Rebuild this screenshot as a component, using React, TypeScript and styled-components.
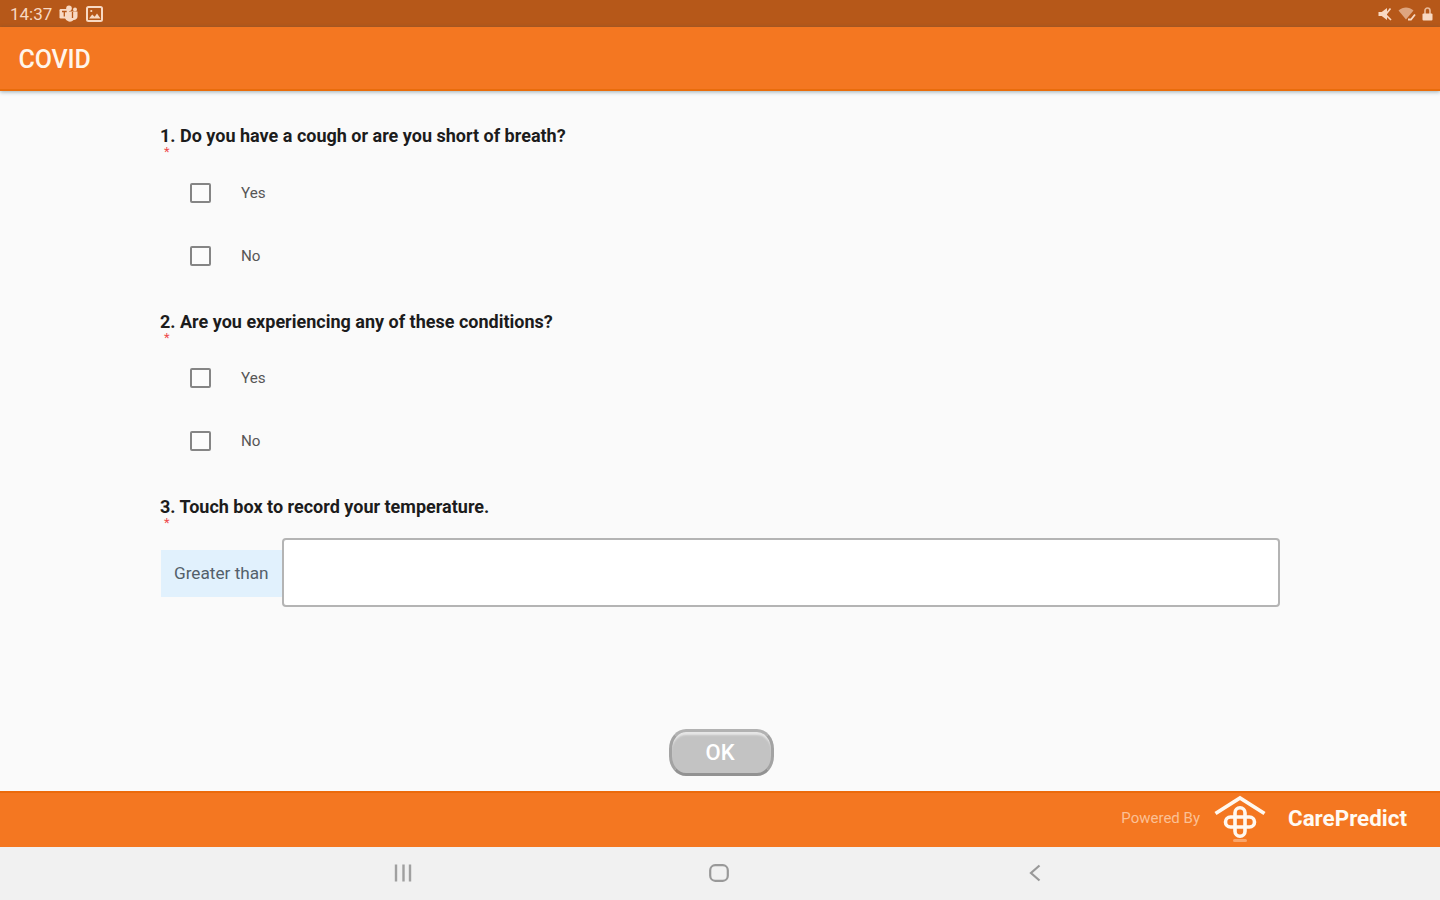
import React, {FC, useState} from "react";
import styled, {createGlobalStyle} from "styled-components";

const GlobalStyle = createGlobalStyle`
  * {
    box-sizing: border-box;
  }

  body {
    margin: 0;
    font-family: Roboto, "Liberation Sans", sans-serif;
    background-color: #fafafa;
  }
`

const Screen = styled.div`
  width: 100%;
  height: 100vh;
  display: flex;
  flex-direction: column;
  overflow: hidden;
`

const StatusBar = styled.div`
  height: 27px;
  flex-shrink: 0;
  display: flex;
  justify-content: space-between;
  align-items: center;
  padding: 1px 7px 0 10px;
  background-color: #b65819;
  color: #f8d9c3;
`

const StatusGroup = styled.div<{$gap: number}>`
  display: flex;
  align-items: center;
  gap: ${({$gap}) => $gap}px;
`

const Clock = styled.span`
  width: 42px;
  font-size: 17px;
  line-height: 20px;
  white-space: nowrap;
`

const AppBar = styled.header`
  height: 64px;
  flex-shrink: 0;
  display: flex;
  align-items: center;
  padding: 3px 18.5px 0;
  background-color: #f47721;
  border-bottom: 2px solid #e96c0b;
  box-shadow: 0 1px 4px rgba(40, 80, 95, 0.45);
  z-index: 1;
`

const Title = styled.h1`
  margin: 0;
  color: #fff5ea;
  font-size: 25px;
  line-height: 28px;
  font-weight: 500;
  letter-spacing: -0.1px;
`

const Survey = styled.main`
  flex: 1;
  display: flex;
  flex-direction: column;
  padding: 35px 160px 0;
  background-color: #fafafa;
`

const Question = styled.section`
  height: 185.5px;
  flex-shrink: 0;
`

const QuestionText = styled.div`
  height: 20px;
  color: #1c1c1c;
  font-size: 18px;
  line-height: 20px;
  font-weight: 700;
  white-space: nowrap;
`

const Required = styled.div`
  height: 15.4px;
  padding-left: 4px;
  color: #ee4b4b;
  font-size: 13px;
  line-height: 12px;
`

const Option = styled.label`
  height: 63px;
  display: flex;
  align-items: center;
  gap: 30px;
  padding-left: 30px;
  color: #565656;
  font-size: 15.2px;
`

const CheckBox = styled.input`
  appearance: none;
  width: 21px;
  height: 20px;
  margin: 0;
  border: 2px solid #858585;
  border-radius: 2px;
  background-color: #fcfcfc;

  &:checked {
    background-color: #f47721;
  }
`

const TemperatureRow = styled.div`
  display: flex;
  align-items: center;
  height: 69px;
  margin-top: 5.6px;
`

const Comparison = styled.div`
  width: 122px;
  height: 47px;
  flex-shrink: 0;
  display: flex;
  align-items: center;
  margin-top: 2px;
  padding: 0 0 1px 13px;
  background-color: #e1f1fd;
  border-left: 1px solid #fafafa;
  color: #53606a;
  font-size: 17.2px;
  white-space: nowrap;
`

const TemperatureInput = styled.input`
  flex: 1;
  height: 69px;
  padding: 0 16px;
  border: 2px solid #b4b4b4;
  border-radius: 4px;
  background-color: #ffffff;
  font-size: 18px;
`

const OkButton = styled.button`
  width: 105px;
  height: 47px;
  margin: auto auto 15px 509px;
  padding: 0 3px 0 0;
  border: 3px solid;
  border-color: #b2b2b2 #a3a3a3 #929292;
  border-radius: 17px / 20px;
  background-color: #c3c3c3;
  box-shadow: inset 0 4px 2px -1px #e6e6e6;
  color: #ffffff;
  font-family: inherit;
  font-size: 22px;
  font-weight: 500;
`

const Footer = styled.footer`
  height: 56px;
  flex-shrink: 0;
  display: flex;
  align-items: center;
  justify-content: flex-end;
  padding: 0 33px 5px 0;
  background-color: #f47721;
  border-top: 2px solid #eb6a0b;
`

const PoweredBy = styled.span`
  color: #fbc095;
  font-size: 15px;
`

const Brand = styled.span`
  color: #fffaf3;
  font-size: 22.4px;
  font-weight: 700;
`

const LogoSvg = styled.svg`
  margin: 4px 22px 0 14px;
`

const NavBar = styled.nav`
  height: 53px;
  flex-shrink: 0;
  display: grid;
  grid-template-columns: repeat(3, 316px);
  justify-content: center;
  align-items: center;
  justify-items: center;
  padding: 0 2px 2px 0;
  background-color: #f1f1f1;
`

const TeamsIcon: FC = () => (
  <svg width="20" height="18" viewBox="0 0 20 18" fill="currentColor">
    <circle cx="10" cy="3.2" r="2.8"/>
    <circle cx="16" cy="4.4" r="2"/>
    <path d="M8 6.5h10.5v5a3.6 3.6 0 0 1-3.9 3.5A5 5 0 0 1 6 13z"/>
    <rect x="0.5" y="4" width="9.5" height="9.5" rx="1.2"/>
    <path d="M3 6.5h4.7M5.3 6.5v5M13.5 7v6" stroke="#b65819" strokeWidth="1.3"/>
  </svg>
)

const PictureIcon: FC = () => (
  <svg width="17" height="16" viewBox="0 0 17 16" fill="none" stroke="currentColor" strokeWidth="2">
    <rect x="1" y="1" width="15" height="14" rx="1.5"/>
    <path d="M3 12.5l3.2-4 2.5 2.2L11 7.5l3.5 5z" fill="currentColor" stroke="none"/>
    <circle cx="5.3" cy="5" r="1.1" fill="currentColor" stroke="none"/>
  </svg>
)

const MuteIcon: FC = () => (
  <svg width="14" height="14" viewBox="0 0 14 14" fill="currentColor">
    <path d="M0.5 5h3.2L9 1v12L3.7 9H0.5z"/>
    <path d="M5 5l8 8M8.5 6.5l4-5" stroke="currentColor" strokeWidth="1.7"/>
  </svg>
)

const WifiIcon: FC = () => (
  <svg width="18" height="14" viewBox="0 0 18 14">
    <path d="M0.5 3.5C5-0.5 11-0.5 15.5 3.5L8 12.5z" fill="currentColor" opacity="0.6"/>
    <path d="M10 12.5h3l4-5" fill="none" stroke="currentColor" strokeWidth="1.8"/>
  </svg>
)

const LockIcon: FC = () => (
  <svg width="11" height="14" viewBox="0 0 11 14">
    <path d="M3 7V3.5a2.5 2.5 0 0 1 5 0V7" fill="none" stroke="currentColor" strokeWidth="1.7" opacity="0.75"/>
    <rect x="0.5" y="6.5" width="10" height="7" rx="1" fill="currentColor"/>
  </svg>
)

const Logo: FC = () => (
  <LogoSvg width="52" height="50" viewBox="0 0 52 50" fill="none" stroke="#fff8f0">
    <path d="M1.5 18.5L26 3L50.5 18.5" strokeWidth="3.8"/>
    <rect x="21" y="12.8" width="10" height="28.5" rx="5" strokeWidth="3.6"/>
    <rect x="11.5" y="22" width="29" height="10" rx="5" strokeWidth="3.6"/>
    <path d="M20.5 45.5h11" stroke="#fcc79f" strokeWidth="3" strokeLinecap="round" opacity="0.6"/>
  </LogoSvg>
)

interface ChoiceQuestionProps {
  text: string;
}

const ChoiceQuestion: FC<ChoiceQuestionProps> = ({text}) => {

  const [answer, setAnswer] = useState("");

  return (
    <Question>
      <QuestionText>{text}</QuestionText>
      <Required>*</Required>
      {["Yes", "No"].map((option) => (
        <Option key={option}>
          <CheckBox type="checkbox" checked={answer === option} onChange={() => setAnswer(option)}/>
          {option}
        </Option>
      ))}
    </Question>
  );
}

const App: FC = () => {

  const [temperature, setTemperature] = useState("");

  return (
    <Screen>
      <GlobalStyle/>
      <StatusBar>
        <StatusGroup $gap={7}>
          <Clock>14:37</Clock>
          <TeamsIcon/>
          <PictureIcon/>
        </StatusGroup>
        <StatusGroup $gap={6}>
          <MuteIcon/>
          <WifiIcon/>
          <LockIcon/>
        </StatusGroup>
      </StatusBar>
      <AppBar>
        <Title>COVID</Title>
      </AppBar>
      <Survey>
        <ChoiceQuestion text="1. Do you have a cough or are you short of breath?"/>
        <ChoiceQuestion text="2. Are you experiencing any of these conditions?"/>
        <QuestionText>3. Touch box to record your temperature.</QuestionText>
        <Required>*</Required>
        <TemperatureRow>
          <Comparison>Greater than</Comparison>
          <TemperatureInput
            name="temperature"
            value={temperature}
            onChange={(event) => setTemperature(event.target.value)}
          />
        </TemperatureRow>
        <OkButton type="button">OK</OkButton>
      </Survey>
      <Footer>
        <PoweredBy>Powered By</PoweredBy>
        <Logo/>
        <Brand>CarePredict</Brand>
      </Footer>
      <NavBar>
        <svg width="18" height="18" viewBox="0 0 18 18" stroke="#a0a0a0" strokeWidth="2.4">
          <path d="M2 0.5v17M9.5 0.5v17M16 0.5v17"/>
        </svg>
        <svg width="20" height="18" viewBox="0 0 20 18" fill="none" stroke="#999999" strokeWidth="2.2">
          <rect x="1.2" y="1.2" width="17.6" height="15.6" rx="5"/>
        </svg>
        <svg width="12" height="18" viewBox="0 0 12 18" fill="none" stroke="#999999" strokeWidth="2.2">
          <path d="M10.5 1.5L2 9l8.5 7.5"/>
        </svg>
      </NavBar>
    </Screen>
  );
}

export default App;
